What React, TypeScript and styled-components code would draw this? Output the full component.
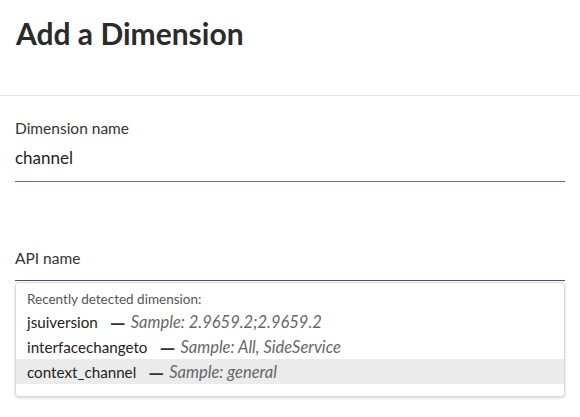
import React from "react";
import styled, { createGlobalStyle } from "styled-components";

const GlobalStyle = createGlobalStyle`
  html, body {
    margin: 0;
    padding: 0;
    background: #fff;
    font-family: Lato, "Noto Sans", sans-serif;
    color: #2b2b2b;
  }
`

const Page = styled.div`
  width: 580px;
  height: 417px;
  overflow: hidden;
  background: #fff;
`

const Header = styled.div`
  height: 96px;
  box-sizing: border-box;
  padding: 15px 16px 0;
  border-bottom: 1px solid #e5e5e5;
`

const Title = styled.h1`
  margin: 0;
  font-size: 30px;
  font-weight: 700;
  line-height: 36px;
  color: #2b2b2b;
`

const Body = styled.div`
  padding: 0 15px;
  display: flex;
  flex-direction: column;
`

const Field = styled.div<{ $top: number }>`
  margin-top: ${(p) => p.$top}px;
  display: flex;
  flex-direction: column;
`

const Label = styled.label`
  font-size: 15.5px;
  line-height: 18px;
  color: #333;
`

const InputLine = styled.div`
  box-sizing: border-box;
  height: 45px;
  padding-top: 11px;
  font-size: 17px;
  line-height: 20px;
  color: #222;
  border-bottom: 1px solid #5c6f88;
`

const EmptyLine = styled.div`
  height: 13px;
  border-bottom: 1px solid #4a5568;
`

const Dropdown = styled.div`
  margin-top: 1px;
  border: 1px solid #dcdcdc;
  border-radius: 4px;
  box-shadow: 0 1px 3px rgba(0, 0, 0, 0.18);
  padding: 8px 0 12px;
  background: #fff;
`

const Caption = styled.div`
  padding: 0 11px;
  margin-bottom: 2px;
  font-size: 13.5px;
  line-height: 16px;
  color: #555;
`

const Option = styled.div<{ $active?: boolean }>`
  height: 25px;
  padding: 0 11px;
  display: flex;
  align-items: center;
  font-size: 15.2px;
  color: #222;
  background: ${(p) => (p.$active ? "#ebebeb" : "transparent")};
  white-space: nowrap;
`

const Dash = styled.span`
  margin: 0 5px 0 12px;
  font-size: 20px;
  line-height: 20px;
  font-weight: 700;
  color: #333;
`

const Sample = styled.span`
  font-style: italic;
  font-size: 16.5px;
  color: #666;
`

const options = [
  { name: "jsuiversion", sample: "2.9659.2;2.9659.2" },
  { name: "interfacechangeto", sample: "All, SideService" },
  { name: "context_channel", sample: "general", active: true },
]

export default function App() {
  return (
    <Page>
      <GlobalStyle />
      <Header>
        <Title>Add a Dimension</Title>
      </Header>
      <Body>
        <Field $top={23}>
          <Label>Dimension name</Label>
          <InputLine>channel</InputLine>
        </Field>
        <Field $top={67}>
          <Label>API name</Label>
          <EmptyLine />
          <Dropdown>
            <Caption>Recently detected dimension:</Caption>
            {options.map((o) => (
              <Option key={o.name} $active={o.active}>
                {o.name}
                <Dash>—</Dash>
                <Sample>Sample: {o.sample}</Sample>
              </Option>
            ))}
          </Dropdown>
        </Field>
      </Body>
    </Page>
  );
}
